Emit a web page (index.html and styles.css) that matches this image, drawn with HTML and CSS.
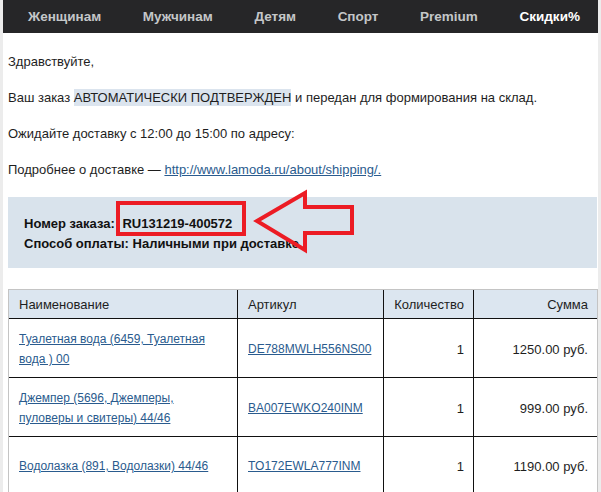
FILE: index.html
```html
<!DOCTYPE html>
<html lang="ru">
<head>
<meta charset="utf-8">
<title>Заказ RU131219-400572</title>
<link rel="stylesheet" href="styles.css">
</head>
<body>
<div class="page">
  <nav class="topnav">
    <a class="nav-item">Женщинам</a>
    <a class="nav-item">Мужчинам</a>
    <a class="nav-item">Детям</a>
    <a class="nav-item">Спорт</a>
    <a class="nav-item">Premium</a>
    <a class="nav-item nav-sale">Скидки%</a>
  </nav>

  <main class="content">
    <p class="para first">Здравствуйте,</p>
    <p class="para">Ваш заказ <span class="mark">АВТОМАТИЧЕСКИ ПОДТВЕРЖДЕН</span> и передан для формирования на склад.</p>
    <p class="para">Ожидайте доставку с 12:00 до 15:00 по адресу:</p>
    <p class="para">Подробнее о доставке — <a class="link" href="#">http://www.lamoda.ru/about/shipping/.</a></p>

    <section class="order-box">
      <div class="order-line">Номер заказа: <span class="order-no">RU131219-400572</span></div>
      <div class="order-line">Способ оплаты: Наличными при доставке</div>
      <svg class="callout" viewBox="0 0 589 71" width="589" height="71" aria-hidden="true">
        <rect x="110" y="6" width="126" height="31" fill="none" stroke="#ec1c24" stroke-width="4"/>
        <polygon points="249,24 297,-4 297,10 344,10 344,36 297,36 297,53" fill="none" stroke="#ec1c24" stroke-width="4" stroke-linejoin="miter"/>
      </svg>
    </section>

    <table class="items">
      <thead>
        <tr>
          <th class="c-name">Наименование</th>
          <th class="c-sku">Артикул</th>
          <th class="c-qty">Количество</th>
          <th class="c-sum">Сумма</th>
        </tr>
      </thead>
      <tbody>
        <tr>
          <td class="c-name"><a class="link" href="#">Туалетная вода (6459, Туалетная вода ) 00</a></td>
          <td class="c-sku"><a class="link" href="#">DE788MWLH556NS00</a></td>
          <td class="c-qty">1</td>
          <td class="c-sum">1250.00 руб.</td>
        </tr>
        <tr>
          <td class="c-name"><a class="link" href="#">Джемпер (5696, Джемперы, пуловеры и свитеры) 44/46</a></td>
          <td class="c-sku"><a class="link" href="#">BA007EWKO240INM</a></td>
          <td class="c-qty">1</td>
          <td class="c-sum">999.00 руб.</td>
        </tr>
        <tr>
          <td class="c-name"><a class="link" href="#">Водолазка (891, Водолазки) 44/46</a></td>
          <td class="c-sku"><a class="link" href="#">TO172EWLA777INM</a></td>
          <td class="c-qty">1</td>
          <td class="c-sum">1190.00 руб.</td>
        </tr>
      </tbody>
    </table>
  </main>
</div>
</body>
</html>
```

FILE: styles.css
```css
html, body {
  margin: 0;
  padding: 0;
  background: #ffffff;
}

body {
  font-family: "Liberation Sans", Arial, sans-serif;
  font-size: 13px;
  color: #1e1e1e;
}

.page {
  border-left: 3px solid #ececec;
  border-right: 3px solid #ececec;
  min-height: 492px;
  box-sizing: border-box;
}

/* top category bar */
.topnav {
  height: 33px;
  background: #262628;
  display: flex;
  align-items: center;
  justify-content: space-between;
  padding: 0 18px 0 25px;
}

.nav-item {
  font-weight: bold;
  font-size: 13.5px;
  color: #c4c6c8;
  text-decoration: none;
}

.nav-sale {
  color: #ffffff;
}

/* letter body */
.content {
  padding: 0 1px 0 5px;
}

.para {
  margin: 18px 0;
  line-height: 18px;
}

.para.first {
  margin-top: 20px;
}

.mark {
  background: #dbe4ee;
  padding: 1px 0;
}

.link {
  color: #2a5b8e;
  text-decoration: underline;
}

/* order summary block */
.order-box {
  position: relative;
  background: #d9e3ec;
  padding: 17px 16px 14px;
  font-weight: bold;
  line-height: 20px;
  color: #111;
}

.order-no {
  margin-left: 4px;
}

.callout {
  position: absolute;
  left: 0;
  top: 0;
  overflow: visible;
}

/* items table */
.items {
  margin-top: 21px;
  width: 590px;
  border-collapse: separate;
  border-spacing: 0;
  border: 1px solid #c4c4c4;
  border-bottom: none;
  table-layout: fixed;
}

.items th,
.items td {
  border-right: 1px solid #111;
  border-bottom: 1px solid #111;
  line-height: 19px;
  font-weight: normal;
  text-align: left;
  vertical-align: middle;
}

.items th:last-child,
.items td:last-child {
  border-right: none;
}

.items th {
  background: #dce6f0;
  padding: 5px 9px 4px 10px;
}

.items td {
  height: 38px;
  padding: 10px 9px 8px 10px;
}

.items td .link {
  font-size: 12px;
}

.items .c-name { width: 209px; }
.items .c-sku  { width: 126px; }
.items .c-qty  { width: 70px; text-align: right; }
.items .c-sum  { text-align: right; }
```
